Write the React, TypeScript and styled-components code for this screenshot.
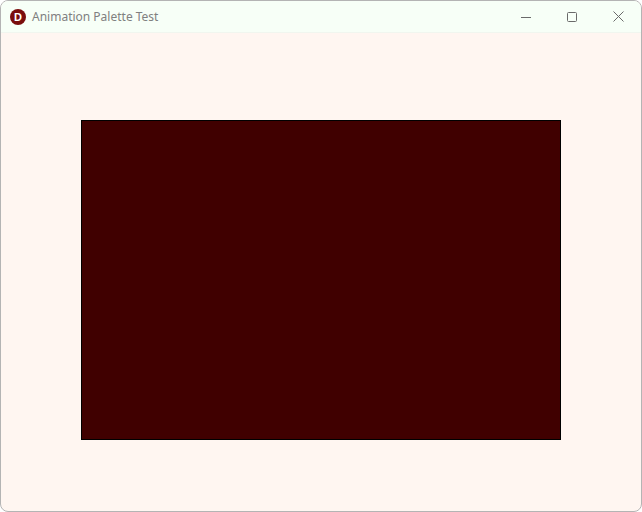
import { createGlobalStyle } from 'styled-components';
import styled from 'styled-components';

const GlobalStyle = createGlobalStyle`
  html, body {
    margin:0;
    padding:0;
    background:#ffffff;
  }
`

const Window = styled.div`
  box-sizing:border-box;
  width:642px;
  height:512px;
  border:1px solid #b4b4b4;
  border-radius:8px;
  overflow:hidden;
  display:flex;
  flex-direction:column;
  background:#fff6f1;
  font-family:"Noto Sans", "Open Sans", sans-serif;
`

const TitleBar = styled.div`
  height:31px;
  flex:0 0 31px;
  display:flex;
  align-items:center;
  background:#f7fff7;
  border-bottom:1px solid #f1f6ef;
`

const AppIcon = styled.div`
  width:16px;
  height:16px;
  margin-left:9px;
  border-radius:50%;
  background:#7a0d0d;
  color:#ffffff;
  font-size:11px;
  font-weight:700;
  line-height:16px;
  text-align:center;
  font-family:"Liberation Sans", sans-serif;
`

const Title = styled.span`
  margin-left:6px;
  font-size:12px;
  color:#808080;
  flex:1;
`

const Controls = styled.div`
  display:flex;
  height:100%;
`

const ControlButton = styled.div`
  width:46px;
  height:100%;
  display:flex;
  align-items:center;
  justify-content:center;
  color:#6a6a6a;
`

const Content = styled.div`
  flex:1;
  padding-top:87px;
  display:flex;
  justify-content:center;
  align-items:flex-start;
`

const Canvas = styled.div`
  box-sizing:border-box;
  width:480px;
  height:320px;
  background:#400000;
  border:1px solid #000000;
`

export default function App() {
  return (
    <>
      <GlobalStyle />
      <Window>
        <TitleBar>
          <AppIcon>D</AppIcon>
          <Title>Animation Palette Test</Title>
          <Controls>
            <ControlButton>
              <svg width="10" height="10" viewBox="0 0 10 10">
                <path d="M0 5.5 H10" stroke="currentColor" strokeWidth="1" />
              </svg>
            </ControlButton>
            <ControlButton>
              <svg width="10" height="10" viewBox="0 0 10 10">
                <rect x="0.5" y="0.5" width="9" height="9" rx="1" fill="none" stroke="currentColor" strokeWidth="1" />
              </svg>
            </ControlButton>
            <ControlButton>
              <svg width="11" height="11" viewBox="0 0 11 11">
                <path d="M0.5 0.5 L10.5 10.5 M10.5 0.5 L0.5 10.5" stroke="currentColor" strokeWidth="1" />
              </svg>
            </ControlButton>
          </Controls>
        </TitleBar>
        <Content>
          <Canvas />
        </Content>
      </Window>
    </>
  );
}
